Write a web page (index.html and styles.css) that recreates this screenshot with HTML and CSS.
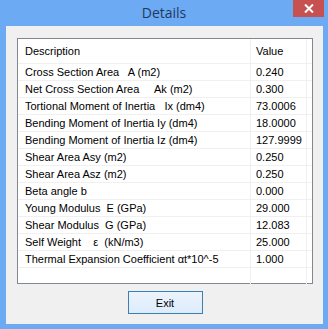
FILE: index.html
```html
<!DOCTYPE html>
<html lang="en">

<head>
    <meta charset="UTF-8">
    <meta name="viewport" content="width=device-width, initial-scale=1.0">
    <title>Details</title>
    <link rel="stylesheet" href="styles.css">
</head>

<body>
    <div class="window">
        <div class="titlebar">
            <span></span>
            <span class="title">Details</span>
            <span class="close">
                <svg width="10" height="9" viewBox="0 0 10 9">
                    <path d="M1 0.5 L9 8.5 M9 0.5 L1 8.5" stroke="#fff" stroke-width="2"/>
                </svg>
            </span>
        </div>

        <div class="client">
            <div class="grid">
                <div class="row head">
                    <div class="cell">Description</div>
                    <div class="cell">Value</div>
                    <div class="cell fill"></div>
                </div>
                <div class="row">
                    <div class="cell">Cross Section Area&nbsp;&nbsp; A (m2)</div>
                    <div class="cell">0.240</div>
                    <div class="cell fill"></div>
                </div>
                <div class="row">
                    <div class="cell">Net Cross Section Area&nbsp;&nbsp;&nbsp;&nbsp; Ak (m2)</div>
                    <div class="cell">0.300</div>
                    <div class="cell fill"></div>
                </div>
                <div class="row">
                    <div class="cell">Tortional Moment of Inertia&nbsp;&nbsp; Ix (dm4)</div>
                    <div class="cell">73.0006</div>
                    <div class="cell fill"></div>
                </div>
                <div class="row">
                    <div class="cell">Bending Moment of Inertia Iy (dm4)</div>
                    <div class="cell">18.0000</div>
                    <div class="cell fill"></div>
                </div>
                <div class="row">
                    <div class="cell">Bending Moment of Inertia Iz (dm4)</div>
                    <div class="cell">127.9999</div>
                    <div class="cell fill"></div>
                </div>
                <div class="row">
                    <div class="cell">Shear Area Asy (m2)</div>
                    <div class="cell">0.250</div>
                    <div class="cell fill"></div>
                </div>
                <div class="row">
                    <div class="cell">Shear Area Asz (m2)</div>
                    <div class="cell">0.250</div>
                    <div class="cell fill"></div>
                </div>
                <div class="row">
                    <div class="cell">Beta angle b</div>
                    <div class="cell">0.000</div>
                    <div class="cell fill"></div>
                </div>
                <div class="row">
                    <div class="cell">Young Modulus&nbsp; E (GPa)</div>
                    <div class="cell">29.000</div>
                    <div class="cell fill"></div>
                </div>
                <div class="row">
                    <div class="cell">Shear Modulus&nbsp; G (GPa)</div>
                    <div class="cell">12.083</div>
                    <div class="cell fill"></div>
                </div>
                <div class="row">
                    <div class="cell">Self Weight&nbsp;&nbsp;&nbsp; ε&nbsp; (kN/m3)</div>
                    <div class="cell">25.000</div>
                    <div class="cell fill"></div>
                </div>
                <div class="row">
                    <div class="cell">Thermal Expansion Coefficient αt*10^-5</div>
                    <div class="cell">1.000</div>
                    <div class="cell fill"></div>
                </div>
                <div class="row blank">
                    <div class="cell"></div>
                    <div class="cell"></div>
                    <div class="cell fill"></div>
                </div>
            </div>

            <button class="exit" type="button">Exit</button>
        </div>
    </div>
</body>

</html>
```

FILE: styles.css
```css
body {
    margin: 0;
    padding: 0;
    background-color: #6caaf4;
    font-family: "Liberation Sans", Arial, sans-serif;
}

.window {
    width: 328px;
    height: 329px;
    box-sizing: border-box;
    padding: 0 5px 6px 6px;
    display: flex;
    flex-direction: column;
}

.titlebar {
    height: 26px;
    flex: none;
    display: grid;
    grid-template-columns: 1fr auto 1fr;
    margin-left: -6px;
    margin-right: -5px;
}

.title {
    font-family: "Open Sans", "Noto Sans", sans-serif;
    font-size: 14px;
    color: #1e3a5f;
    line-height: 24px;
    padding-top: 1px;
}

.close {
    justify-self: end;
    align-self: start;
    width: 31px;
    height: 17px;
    margin-right: 4px;
    background-color: #c75050;
    display: flex;
    align-items: center;
    justify-content: center;
}

.client {
    flex: 1;
    background-color: #f0f0f0;
    padding: 12px 10px 10px 11px;
    display: flex;
    flex-direction: column;
    align-items: center;
    gap: 7px;
}

.grid {
    align-self: stretch;
    height: 246px;
    box-sizing: border-box;
    border: 1px solid #828790;
    background-color: #fff;
    font-size: 11px;
    color: #000;
}

.row {
    display: grid;
    grid-template-columns: 233px 56px 1fr;
    height: 17px;
    box-sizing: border-box;
    border-bottom: 1px solid #f0f0f0;
}

.row.head {
    height: 25px;
}

.row.blank {
    border-bottom: none;
}

.cell {
    padding-left: 7px;
    border-right: 1px solid #f0f0f0;
    white-space: nowrap;
    overflow: hidden;
    display: flex;
    align-items: center;
}

.cell + .cell {
    padding-left: 5px;
}

.cell.fill {
    padding: 0;
    border-right: none;
}

.exit {
    width: 75px;
    height: 23px;
    font-family: "Liberation Sans", Arial, sans-serif;
    font-size: 11px;
    color: #000;
    background: linear-gradient(#ecf4fc, #dcecfc);
    border: 1px solid #3c7fb1;
    border-radius: 0;
    padding: 0;
}
```
